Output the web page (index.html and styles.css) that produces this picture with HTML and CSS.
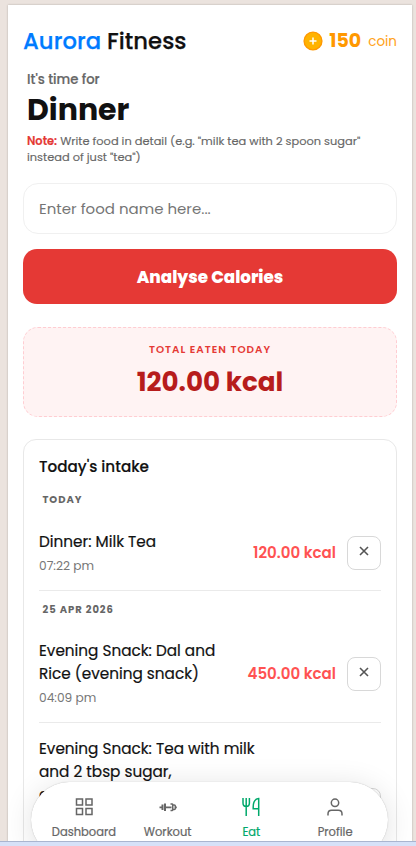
FILE: index.html
```
<!DOCTYPE html>
<html lang="en">
<head>
<meta charset="utf-8">
<title>Aurora Fitness</title>
<link rel="stylesheet" href="styles.css">
</head>
<body>
<div class="phone">
  <header class="top">
    <div class="brand"><span>Aurora</span> Fitness</div>
    <div class="coins">
      <svg width="20" height="20" viewBox="0 0 20 20"><circle cx="10" cy="10" r="8.9" fill="#ffb300" stroke="#ff9800" stroke-width="1.4"/><path d="M10 6.5v7M6.5 10h7" stroke="#fff" stroke-width="1.5"/></svg>
      <b>150</b><span>coin</span>
    </div>
  </header>
  <section class="intro">
    <p class="lead">It's time for</p>
    <h1>Dinner</h1>
    <p class="note"><b>Note:</b> Write food in detail (e.g. "milk tea with 2 spoon sugar"<br>instead of just "tea")</p>
  </section>
  <input class="food" type="text" placeholder="Enter food name here...">
  <button class="analyse">Analyse Calories</button>
  <section class="total">
    <div class="total-label">TOTAL EATEN TODAY</div>
    <div class="total-value">120.00 kcal</div>
  </section>
  <section class="intake">
    <h2>Today's intake</h2>
    <div class="day">TODAY</div>
    <div class="row first">
      <div class="info"><div class="name">Dinner: Milk Tea</div><div class="time">07:22 pm</div></div>
      <div class="kcal">120.00 kcal</div>
      <button class="del"><svg width="10" height="10" viewBox="0 0 10 10"><path d="M1 1l8 8M9 1L1 9"/></svg></button>
    </div>
    <div class="day second">25 APR 2026</div>
    <div class="row mid">
      <div class="info"><div class="name">Evening Snack: Dal and<br>Rice (evening snack)</div><div class="time">04:09 pm</div></div>
      <div class="kcal">450.00 kcal</div>
      <button class="del"><svg width="10" height="10" viewBox="0 0 10 10"><path d="M1 1l8 8M9 1L1 9"/></svg></button>
    </div>
    <div class="row last">
      <div class="info"><div class="name">Evening Snack: Tea with milk<br>and 2 tbsp sugar,<br>approx</div></div>
      <button class="del"></button>
    </div>
  </section>
</div>
<nav class="nav">
  <div class="tab">
    <svg width="20" height="20" viewBox="0 0 20 20"><path d="M2.500 2h6v6h-6zM12 2h6v6h-6zM2.500 11.500h6v6h-6zM12 11.500h6v6h-6z"/></svg>
    <span>Dashboard</span>
  </div>
  <div class="tab">
    <svg width="20" height="20" viewBox="0 0 20 20"><path d="M1.500 10.300h3M7.500 10.300h6M17.500 10.300h1.300" stroke-width="1.800"/><path d="M4.500 7.600v5.400M7 6.500v7.600" stroke-width="2"/><path d="M12.500 7h1.500q.7 0 .7.700v5.200q0 .7-.7.700h-1.500M15 8h1.300q1 0 1 1v2.600q0 1-1 1H15" stroke-width="1.500"/></svg>
    <span>Workout</span>
  </div>
  <div class="tab active">
    <svg width="20" height="20" viewBox="0 0 20 20"><path d="M2 1v5q0 3.500 3.200 3.500T8.400 6V1M5.200 1v18M17.700 19V1.600q-5.500.6-5.500 8.400v1.800h5.500"/></svg>
    <span>Eat</span>
  </div>
  <div class="tab">
    <svg width="20" height="20" viewBox="0 0 20 20"><circle cx="10" cy="5.800" r="3.700"/><path d="M3 18.500v-1.600q0-3.600 3.600-3.600h6.800q3.600 0 3.600 3.600v1.600"/></svg>
    <span>Profile</span>
  </div>
</nav>
<div class="strip"></div>
</body>
</html>
```
FILE: styles.css
```
* { box-sizing: border-box; margin: 0; padding: 0; }
html, body { height: 846px; overflow: hidden; }
body { position: relative; background: #ebe3de; padding: 5px 4px 0 8px; font-family: Poppins, Inter, "Open Sans", sans-serif; color: #111; }
button, input { font-family: inherit; }
.phone { height: 841px; overflow: hidden; background: #fff; padding: 19px 15px 0; box-shadow: 0 0 2px rgba(0,0,0,.25); }
.top { display: flex; justify-content: space-between; align-items: center; height: 34px; }
.brand { font-size: 22.700px; font-weight: 500; letter-spacing: .05px; white-space: nowrap; -webkit-text-stroke: .25px currentColor; }
.brand span { color: #007bff; }
.coins { display: flex; align-items: center; color: #ff9800; }
.coins b { font-size: 19px; line-height: 28px; font-weight: 700; margin: 0 7px 0 6px; }
.coins span { font-size: 13.500px; opacity: .9; padding-top: 2px; }
.intro { padding: 12px 4px 0; height: 125px; white-space: nowrap; }
.lead { font-size: 13.200px; line-height: 20px; font-weight: 500; color: #666; -webkit-text-stroke: .2px currentColor; }
h1 { font-size: 30px; line-height: 39px; font-weight: 700; }
.note { font-size: 11.400px; line-height: 16px; color: #666; font-weight: 400; margin-top: 4px; -webkit-text-stroke: .15px currentColor; }
.note b { color: #e53935; font-weight: 600; }
.food { display: block; width: 100%; height: 51px; border: 1px solid #f0f0f0; border-radius: 15px; background: #fff; padding: 0 15px; font-size: 15px; }
.food::placeholder { color: #757575; }
.analyse { display: block; width: 100%; height: 55px; margin-top: 15px; padding-top: 1px; border: 0; border-radius: 14px; background: #e53935; color: #fff; font-size: 16.700px; font-weight: 800; }
.total { margin-top: 23px; height: 90px; border: 1px dashed #ffcdd2; border-radius: 15px; background: #fff3f3; text-align: center; padding-top: 13px; }
.total-label { font-size: 10.400px; line-height: 18px; font-weight: 600; letter-spacing: 1px; color: #e53935; }
.total-value { font-size: 26.200px; line-height: 39px; margin-top: 3px; font-weight: 700; color: #b71c1c; }
.intake { margin-top: 22px; height: 500px; border: 1px solid #e8e8e8; border-radius: 13px; padding: 15px 15px 0; }
h2 { font-size: 15.200px; line-height: 24px; font-weight: 500; -webkit-text-stroke: .15px currentColor; }
.day { font-size: 10px; line-height: 16px; font-weight: 700; letter-spacing: .95px; color: #666; margin-top: 13px; padding-left: 3.500px; }
.day.second { margin-top: 11px; }
.row { display: flex; align-items: center; border-bottom: 1px solid #eaeaea; }
.row.first { height: 83px; padding-top: 7px; }
.row.mid { height: 105px; padding-top: 7px; }
.row.last { padding-top: 14px; align-items: flex-start; }
.info { flex: 1; }
.name { font-size: 15.250px; line-height: 23px; white-space: nowrap; font-weight: 400; -webkit-text-stroke: .2px currentColor; }
.time { font-size: 12.200px; line-height: 20px; color: #777; margin-top: 3px; }
.kcal { font-size: 15.050px; font-weight: 600; color: #ff5252; white-space: nowrap; }
.del { width: 34px; height: 34px; flex: none; margin-left: 11px; border: 1px solid #d8d8d8; border-radius: 8px; background: #fff; display: grid; place-items: center; }
.del svg { fill: none; stroke: #555; stroke-width: 1.600; margin-top: -3px; }
.row.last .del { margin-top: 51px; }
.nav { position: absolute; left: 31px; top: 782px; width: 357px; height: 76px; border-radius: 38px; background: #fff; box-shadow: 0 0 1px rgba(0,0,0,.3), 0 4px 30px rgba(0,0,0,.12); display: flex; padding: 15px 11px 0; }
.tab { flex: 1; display: flex; flex-direction: column; align-items: center; color: #666; font-size: 11.500px; font-weight: 400; line-height: 18px; white-space: nowrap; -webkit-text-stroke: .2px currentColor; }
.tab svg { fill: none; stroke: currentColor; stroke-width: 1.500; margin-bottom: 6px; }
.tab.active { color: #00a86b; }
.strip { position: absolute; left: 0; top: 841px; width: 416px; height: 5px; background: #d6e1f8; border-top: 1px solid #a9b5d0; }
```
